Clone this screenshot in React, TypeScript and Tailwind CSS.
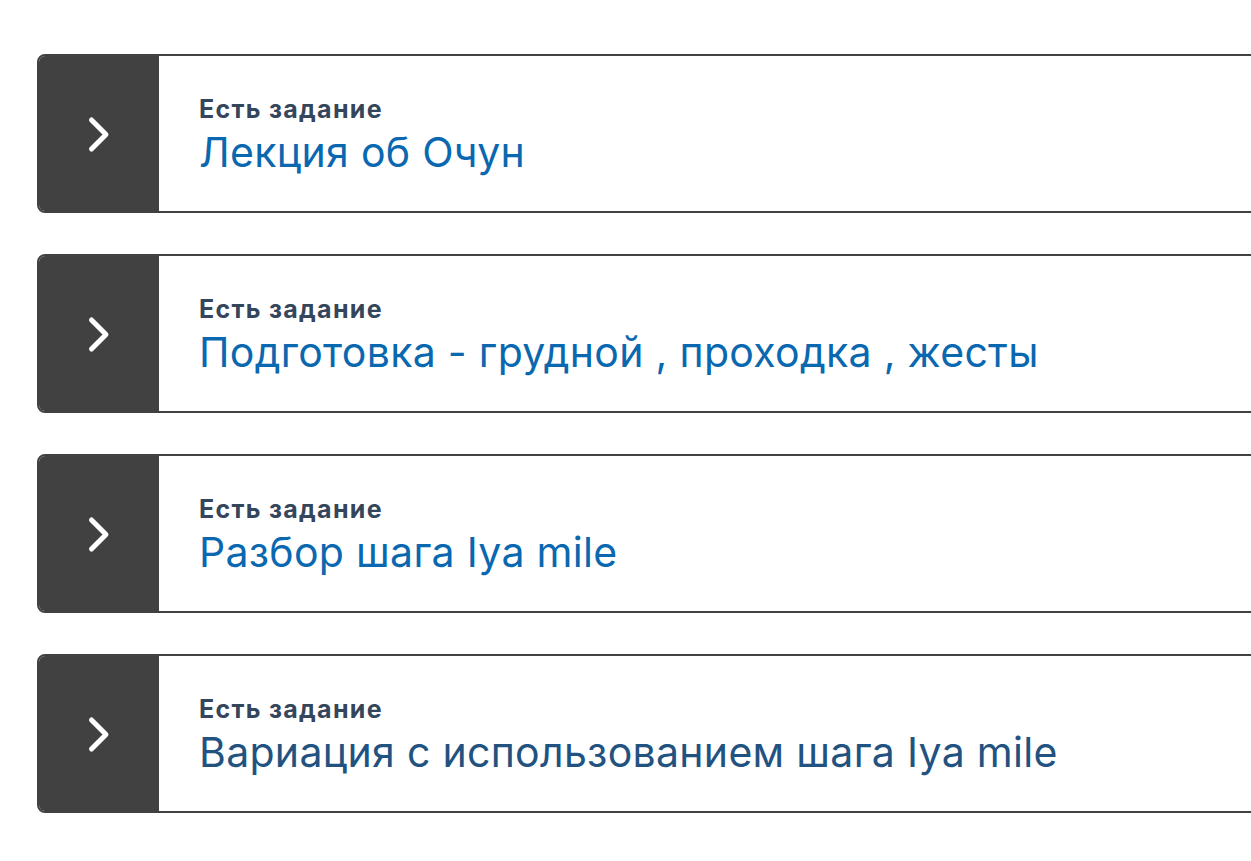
import React from 'react';

const items = [
  { title: 'Лекция об Очун', visited: false },
  { title: 'Подготовка - грудной , проходка , жесты', visited: false },
  { title: 'Разбор шага Iya mile', visited: false },
  { title: 'Вариация с использованием шага Iya mile', visited: true },
];

function Chevron() {
  return (
    <svg width="24" height="38" viewBox="0 0 24 38" fill="none">
      <path d="M4.5 4 L19 18.5 L4.5 33" stroke="white" strokeWidth="5" strokeLinecap="round" strokeLinejoin="round" />
    </svg>
  );
}

export default function App() {
  return (
    <div className="w-screen min-h-screen overflow-hidden bg-white pt-[54px] pl-[37px]" style={{ fontFamily: 'Inter, "Noto Sans", sans-serif' }}>
      <div className="flex flex-col gap-[41px] mr-[-40px]">
        {items.map((item) => (
          <div key={item.title} className="flex h-[159px] rounded-l-lg border-2 border-[#414141] bg-white overflow-hidden">
            <div className="w-[120px] shrink-0 bg-[#414141] flex items-center justify-center pt-[2px]">
              <Chevron />
            </div>
            <div className="flex flex-col pl-[40px] pt-[38px]">
              <div className="text-[25px] font-bold leading-[30px] text-[#34465c] tracking-[1.3px]">Есть задание</div>
              <div className={`mt-[4px] text-[41px] leading-[48px] tracking-[0.3px] ${item.visited ? 'text-[#22527f]' : 'text-[#0a68b0]'}`}>
                {item.title}
              </div>
            </div>
          </div>
        ))}
      </div>
    </div>
  );
}
